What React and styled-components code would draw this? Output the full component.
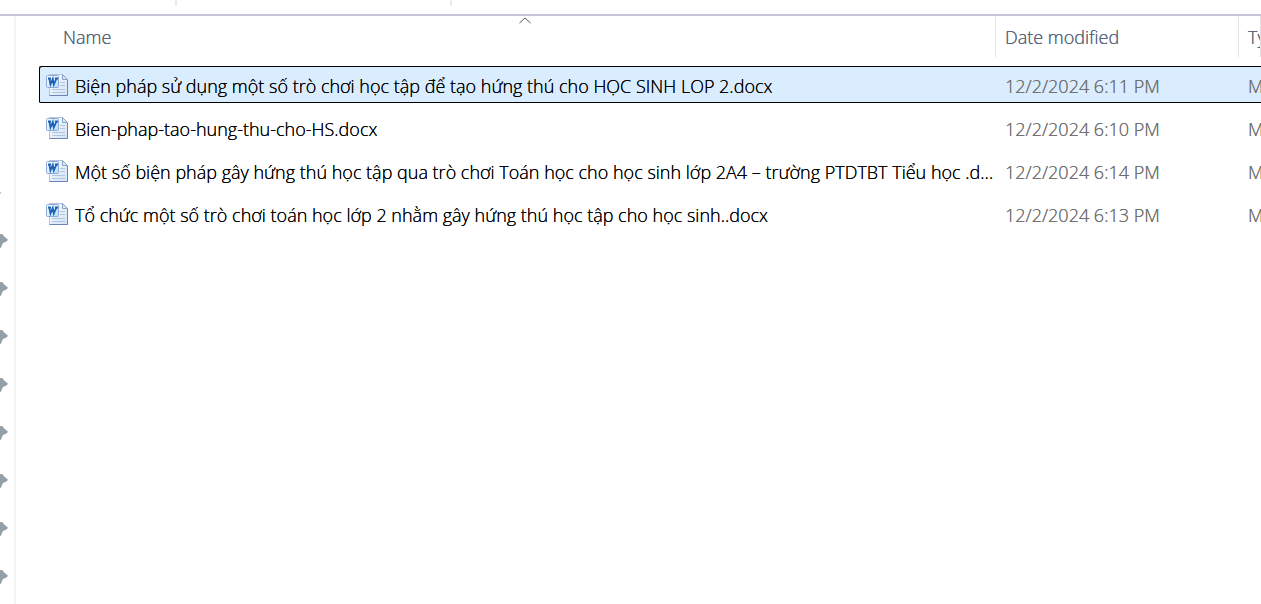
import React from "react";
import styled, { createGlobalStyle } from "styled-components";

const GlobalStyle = createGlobalStyle`
  * { box-sizing: border-box; }
  body {
    margin: 0;
    background: #fff;
    color: #000;
    font-family: "Open Sans", "Noto Sans", sans-serif;
    font-size: 18px;
    font-weight: 300;
    line-height: 24px;
    text-shadow: 0 0 0 currentColor;
    overflow: hidden;
  }
`;

const Explorer = styled.div`
  display: flex;
  flex-direction: column;
  height: 100vh;
`;

const CommandBar = styled.header`
  display: flex;
  flex: none;
  height: 16px;
  padding-bottom: 8px;
  border-bottom: 2px solid #cbc4d9;
`;

const CommandGroup = styled.div`
  width: ${(p) => p.$width}px;
  border-right: 2px solid #ececee;
`;

const Body = styled.div`
  display: flex;
  flex: 1;
  min-height: 0;
`;

const Sidebar = styled.nav`
  flex: none;
  width: 16px;
  padding-top: 153px;
  border-right: 2px solid #f5f5f5;
  overflow: hidden;
`;

const SidebarItem = styled.div`
  display: flex;
  align-items: center;
  height: 48px;
`;

const Dash = styled.span`
  width: 1px;
  height: 2px;
  background: #c3c8cb;
`;

const Content = styled.main`
  flex: 1;
  min-width: 0;
  padding-left: 23px;
  overflow: hidden;
`;

const FileTable = styled.table`
  display: block;
`;

const Head = styled.thead`
  display: block;
  margin-bottom: 9px;
`;

const Rows = styled.tbody`
  display: flex;
  flex-direction: column;
  gap: 6px;
`;

const Columns = styled.tr`
  display: grid;
  grid-template-columns: 957px 243px minmax(0, 1fr);
`;

const FileRow = styled(Columns)`
  height: 37px;
  align-items: center;
  padding-top: 2px;
  border-radius: 2px 0 0 2px;
  background: ${(p) => (p.$selected ? "#d9edff" : "transparent")};
  box-shadow: ${(p) => (p.$selected ? "inset 1px 1px #000, inset 0 -1px #000" : "none")};
`;

const HeadCell = styled.th`
  position: relative;
  height: 41px;
  margin-left: ${(p) => p.$indent || 0}px;
  padding: 9px 9px 0;
  border-right: 1px solid #e2e2e4;
  color: #56657b;
  font-weight: 300;
  text-align: left;
  white-space: nowrap;
  overflow: hidden;
`;

const SortArrow = styled.svg`
  position: absolute;
  top: 1px;
  left: calc(50% - 6px);
`;

const NameCell = styled.td`
  display: flex;
  align-items: center;
  gap: 6px;
  min-width: 0;
  padding: 0 2px 0 6px;
`;

const FileName = styled.span`
  min-width: 0;
  overflow: hidden;
  text-overflow: ellipsis;
  white-space: nowrap;
`;

const InfoCell = styled.td`
  padding: 0 9px;
  color: #707070;
  white-space: nowrap;
  overflow: hidden;
`;

const DocIcon = styled.svg`
  flex: none;
  margin-bottom: 2px;
`;

function WordIcon() {
  return (
    <DocIcon width="24" height="24" viewBox="0 0 24 24" aria-hidden="true">
      <defs>
        <linearGradient id="page" x1="0" y1="0" x2="1" y2="1">
          <stop offset="0" stopColor="#fbfdff" />
          <stop offset="1" stopColor="#d3e2f5" />
        </linearGradient>
        <linearGradient id="badge" x1="0" y1="0" x2="1" y2="1">
          <stop offset="0" stopColor="#fff" />
          <stop offset="1" stopColor="#b4dcfa" />
        </linearGradient>
      </defs>
      <path d="M4.500 1.500h13l5 5v16h-18z" fill="url(#page)" stroke="#b3c3dc" />
      <path d="M22.500 7v15.500h-18" fill="none" stroke="#6b84b5" />
      <path d="M17.500 1.500v5h5z" fill="#dce7f5" stroke="#8ba2c8" />
      <path d="M15 9.500h5M15 12.500h5M7 16.500h13M7 19.500h13" stroke="#b0c5e2" />
      <rect x="1.500" y="2.500" width="12" height="12" rx="1" fill="url(#badge)" stroke="#8fa9d6" />
      <path d="M3 5.500h3M10 5.500h3M4.300 5.500L5.500 11.500 7.800 6l1 5.500 2.700-6" fill="none" stroke="#1c62b8" strokeWidth="1.800" />
    </DocIcon>
  );
}

function PinIcon() {
  return (
    <svg width="8" height="16" viewBox="0 0 8 16" aria-hidden="true">
      <path d="M0 1h2l1 1 1 1.200 3.600 3v1.300L5.500 9 3 10l-1 2-.7 2L0 15.500z" fill="#93a0a8" />
    </svg>
  );
}

const files = [
  { name: "Biện pháp sử dụng một số trò chơi học tập để tạo hứng thú cho HỌC SINH LOP 2.docx", date: "12/2/2024 6:11 PM", selected: true },
  { name: "Bien-phap-tao-hung-thu-cho-HS.docx", date: "12/2/2024 6:10 PM" },
  { name: "Một số biện pháp gây hứng thú học tập qua trò chơi Toán học cho học sinh lớp 2A4 – trường PTDTBT Tiểu học .d...", date: "12/2/2024 6:14 PM" },
  { name: "Tổ chức một số trò chơi toán học lớp 2 nhằm gây hứng thú học tập cho học sinh..docx", date: "12/2/2024 6:13 PM" },
];

const pins = [1, 2, 3, 4, 5, 6, 7, 8];

export default function App() {
  return (
    <Explorer>
      <GlobalStyle />
      <CommandBar>
        <CommandGroup $width={177} />
        <CommandGroup $width={275} />
      </CommandBar>
      <Body>
        <Sidebar>
          <SidebarItem><Dash /></SidebarItem>
          {pins.map((pin) => (
            <SidebarItem key={pin}><PinIcon /></SidebarItem>
          ))}
        </Sidebar>
        <Content>
          <FileTable>
            <Head>
              <Columns>
                <HeadCell scope="col" $indent={15} aria-sort="ascending">
                  Name
                  <SortArrow width="12" height="7" viewBox="0 0 12 7" aria-hidden="true">
                    <path d="M.5 6L6 1l5.500 5" fill="none" stroke="#555" />
                  </SortArrow>
                </HeadCell>
                <HeadCell scope="col">Date modified</HeadCell>
                <HeadCell scope="col">Type</HeadCell>
              </Columns>
            </Head>
            <Rows>
              {files.map((file) => (
                <FileRow key={file.name} $selected={file.selected}>
                  <NameCell>
                    <WordIcon />
                    <FileName>{file.name}</FileName>
                  </NameCell>
                  <InfoCell>{file.date}</InfoCell>
                  <InfoCell>Microsoft Word Document</InfoCell>
                </FileRow>
              ))}
            </Rows>
          </FileTable>
        </Content>
      </Body>
    </Explorer>
  );
}
